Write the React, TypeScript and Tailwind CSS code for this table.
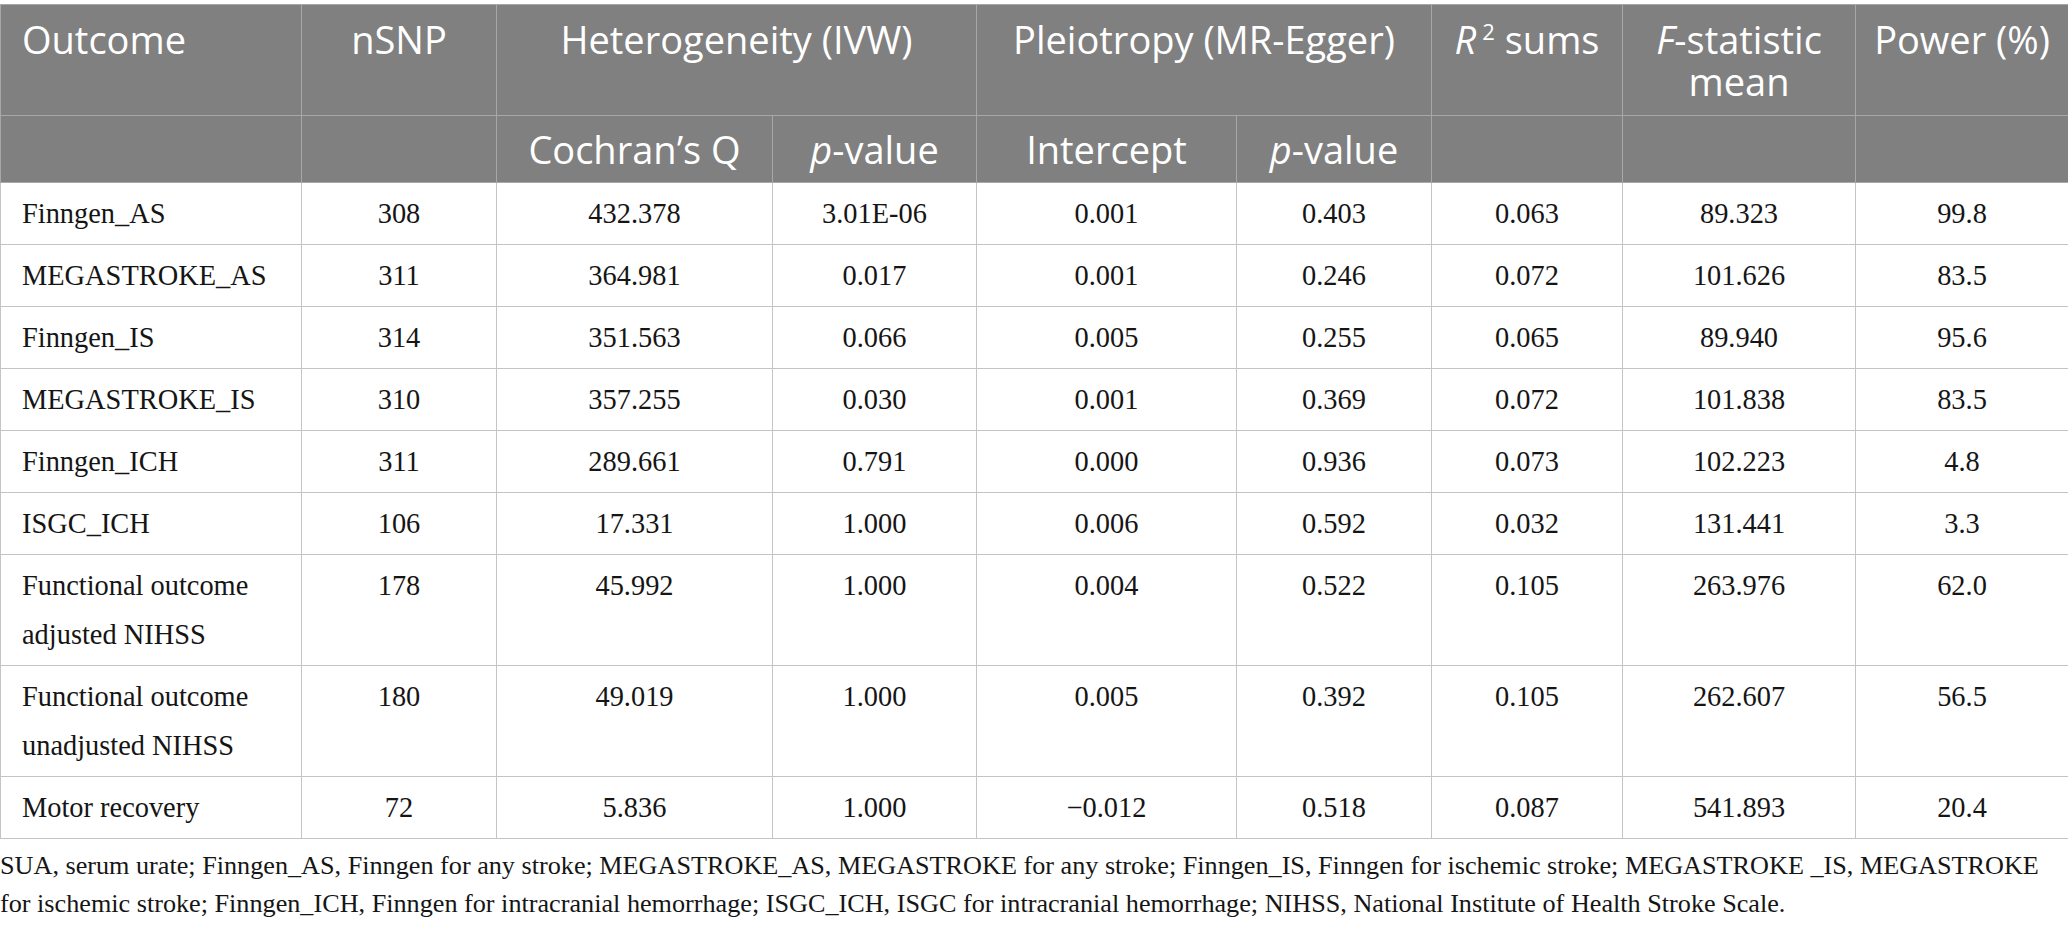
import React from "react";

const rows: { name: React.ReactNode; v: string[] }[] = [
  { name: "Finngen_AS", v: ["308", "432.378", "3.01E-06", "0.001", "0.403", "0.063", "89.323", "99.8"] },
  { name: "MEGASTROKE_AS", v: ["311", "364.981", "0.017", "0.001", "0.246", "0.072", "101.626", "83.5"] },
  { name: "Finngen_IS", v: ["314", "351.563", "0.066", "0.005", "0.255", "0.065", "89.940", "95.6"] },
  { name: "MEGASTROKE_IS", v: ["310", "357.255", "0.030", "0.001", "0.369", "0.072", "101.838", "83.5"] },
  { name: "Finngen_ICH", v: ["311", "289.661", "0.791", "0.000", "0.936", "0.073", "102.223", "4.8"] },
  { name: "ISGC_ICH", v: ["106", "17.331", "1.000", "0.006", "0.592", "0.032", "131.441", "3.3"] },
  {
    name: (
      <>
        Functional outcome
        <br />
        adjusted NIHSS
      </>
    ),
    v: ["178", "45.992", "1.000", "0.004", "0.522", "0.105", "263.976", "62.0"],
  },
  {
    name: (
      <>
        Functional outcome
        <br />
        unadjusted NIHSS
      </>
    ),
    v: ["180", "49.019", "1.000", "0.005", "0.392", "0.105", "262.607", "56.5"],
  },
  { name: "Motor recovery", v: ["72", "5.836", "1.000", "\u22120.012", "0.518", "0.087", "541.893", "20.4"] },
];

const widths = [301, 195, 276, 204, 260, 195, 191, 233, 213];

export default function App() {
  const th1 =
    "border border-[#a8a8a8] align-top pt-[13px] pb-[13px] font-normal text-center whitespace-nowrap";
  const th2 = "border border-[#a8a8a8] align-middle font-normal text-center h-[67px] whitespace-nowrap";
  const td =
    "border border-[#c4c4c4] align-top text-center pt-[6px] pb-[6px] leading-[49px] whitespace-nowrap";
  return (
    <div className="w-[2068px] h-[926px] bg-white pt-[4px] overflow-hidden">
      <table className="table-fixed border-collapse border border-[#bdbdbd] w-[2068px]">
        <colgroup>
          {widths.map((w, i) => (
            <col key={i} style={{ width: w }} />
          ))}
        </colgroup>
        <thead className="bg-[#808080] text-white font-['Open_Sans',sans-serif] text-[38px] leading-[42px]">
          <tr>
            <th className={th1 + " text-left pl-[21px]"}>Outcome</th>
            <th className={th1}>nSNP</th>
            <th className={th1} colSpan={2}>
              Heterogeneity (IVW)
            </th>
            <th className={th1} colSpan={2}>
              Pleiotropy (MR-Egger)
            </th>
            <th className={th1}>
              <i className="pr-[2px]">R</i>
              <span className="inline-block align-top text-[22px] leading-[22px] ml-[4px] mt-[2px]">2</span> sums
            </th>
            <th className={th1}>
              <i>F</i>-statistic
              <br />
              mean
            </th>
            <th className={th1}>Power (%)</th>
          </tr>
          <tr>
            <th className={th2}></th>
            <th className={th2}></th>
            <th className={th2}>Cochran&rsquo;s Q</th>
            <th className={th2}>
              <i>p</i>-value
            </th>
            <th className={th2}>Intercept</th>
            <th className={th2}>
              <i>p</i>-value
            </th>
            <th className={th2}></th>
            <th className={th2}></th>
            <th className={th2}></th>
          </tr>
        </thead>
        <tbody className="font-['Liberation_Serif',serif] text-[28.4px] text-[#151515]">
          {rows.map((r, i) => (
            <tr key={i}>
              <td className={td + " text-left pl-[21px]"}>{r.name}</td>
              {r.v.map((v, j) => (
                <td key={j} className={td}>
                  {v}
                </td>
              ))}
            </tr>
          ))}
        </tbody>
      </table>
      <p className="mt-[8px] font-['Liberation_Serif',serif] text-[26.2px] leading-[38px] text-[#151515] whitespace-nowrap">
        SUA, serum urate; Finngen_AS, Finngen for any stroke; MEGASTROKE_AS, MEGASTROKE for any stroke; Finngen_IS,
        Finngen for ischemic stroke; MEGASTROKE _IS, MEGASTROKE
        <br />
        for ischemic stroke; Finngen_ICH, Finngen for intracranial hemorrhage; ISGC_ICH, ISGC for intracranial
        hemorrhage; NIHSS, National Institute of Health Stroke Scale.
      </p>
    </div>
  );
}
